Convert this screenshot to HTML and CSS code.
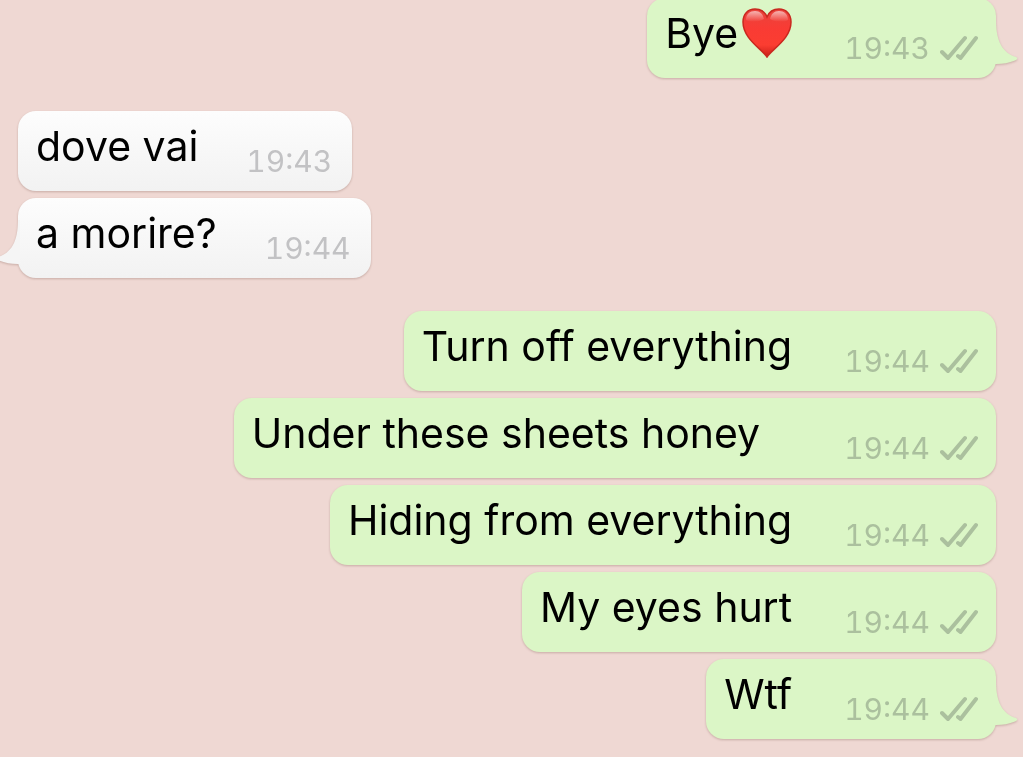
FILE: index.html
```html
<!DOCTYPE html>
<html lang="en">
<head>
<meta charset="utf-8">
<meta name="viewport" content="width=device-width, initial-scale=1">
<title>Chat</title>
<link rel="stylesheet" href="styles.css">
</head>
<body>
<svg class="defs" aria-hidden="true">
  <defs>
    <symbol id="ticks" viewBox="0 0 38 26">
      <path d="M2 17L8 23L25 3M18 21L20.500 23L36 3" fill="none" stroke="currentColor" stroke-width="4" stroke-linecap="round" stroke-linejoin="round"/>
    </symbol>
    <symbol id="tail" viewBox="0 0 24 46">
      <path d="M0 0H2C2 22 9 33 22 37Q25 39 21 40.500Q12 44 2 44H0Z" fill="currentColor"/>
    </symbol>
    <linearGradient id="heart-red" x1="0" y1="0" x2="0" y2="1">
      <stop offset="0" stop-color="#e8443d"/>
      <stop offset="0.400" stop-color="#f93b34"/>
      <stop offset="0.750" stop-color="#fb3d31"/>
      <stop offset="1" stop-color="#c91f17"/>
    </linearGradient>
    <linearGradient id="heart-shine" x1="0" y1="0" x2="0" y2="1">
      <stop offset="0" stop-color="#fff" stop-opacity="0.600"/>
      <stop offset="1" stop-color="#fff" stop-opacity="0"/>
    </linearGradient>
  </defs>
</svg>
<main class="chat">
  <section class="group sent">
    <article class="bubble">
      <p class="text">Bye<svg class="heart" viewBox="0 0 50 50" role="img" aria-label="Red heart">
        <path d="M25 49C20 41 1 31 1 14C1 6 6 1 13 1C19 1 23 4 25 9C27 4 31 1 37 1C44 1 49 6 49 14C49 31 30 41 25 49Z" fill="url(#heart-red)" stroke="#c9281f" stroke-width="1.500"/>
        <path d="M4 12C4 6 8 3 13 3C18 3 21 6 22 11C17 14 8 15 4 12ZM46 12C46 6 42 3 37 3C32 3 29 6 28 11C33 14 42 15 46 12Z" fill="url(#heart-shine)"/>
      </svg></p>
      <div class="meta"><time>19:43</time><svg class="ticks" role="img" aria-label="Delivered"><use href="#ticks"/></svg></div>
      <svg class="tail" aria-hidden="true"><use href="#tail"/></svg>
    </article>
  </section>
  <section class="group received">
    <article class="bubble">
      <p class="text">dove vai</p>
      <div class="meta"><time>19:43</time></div>
    </article>
    <article class="bubble">
      <p class="text">a morire?</p>
      <div class="meta"><time>19:44</time></div>
      <svg class="tail" aria-hidden="true"><use href="#tail"/></svg>
    </article>
  </section>
  <section class="group sent">
    <article class="bubble">
      <p class="text">Turn off everything</p>
      <div class="meta"><time>19:44</time><svg class="ticks" role="img" aria-label="Delivered"><use href="#ticks"/></svg></div>
    </article>
    <article class="bubble roomy">
      <p class="text">Under these sheets honey</p>
      <div class="meta"><time>19:44</time><svg class="ticks" role="img" aria-label="Delivered"><use href="#ticks"/></svg></div>
    </article>
    <article class="bubble">
      <p class="text">Hiding from everything</p>
      <div class="meta"><time>19:44</time><svg class="ticks" role="img" aria-label="Delivered"><use href="#ticks"/></svg></div>
    </article>
    <article class="bubble">
      <p class="text">My eyes hurt</p>
      <div class="meta"><time>19:44</time><svg class="ticks" role="img" aria-label="Delivered"><use href="#ticks"/></svg></div>
    </article>
    <article class="bubble">
      <p class="text">Wtf</p>
      <div class="meta"><time>19:44</time><svg class="ticks" role="img" aria-label="Delivered"><use href="#ticks"/></svg></div>
      <svg class="tail" aria-hidden="true"><use href="#tail"/></svg>
    </article>
  </section>
</main>
</body>
</html>
```
FILE: styles.css
```css
* {
  box-sizing: border-box;
}

body {
  margin: 0;
  background: #efd8d3;
  color: #000;
  font-family: Inter, "Liberation Sans", sans-serif;
  overflow: hidden;
}

.defs {
  position: absolute;
  width: 0;
  height: 0;
}

/* The first message is scrolled slightly past the top edge. */
.chat {
  display: flex;
  flex-direction: column;
  gap: 33px;
  margin-top: -2px;
  padding: 0 27px 18px 18px;
}

.group {
  display: flex;
  flex-direction: column;
  gap: 7px;
}

.sent {
  align-items: flex-end;
}

.received {
  align-items: flex-start;
}

.bubble {
  position: relative;
  display: flex;
  align-items: flex-end;
  gap: 52px;
  padding: 9px 18px 11px;
  border-radius: 18px;
  filter: drop-shadow(0 1px 1px rgba(110, 70, 60, 0.3));
}

.roomy {
  gap: 84px;
}

.sent .bubble {
  background: #dbf6c6;
}

.received .bubble {
  gap: 48px;
  padding-right: 20px;
  background: linear-gradient(#fdfdfd, #f2f2f2);
}

.text {
  display: flex;
  align-items: center;
  margin: 0;
  padding-bottom: 8px;
  font-size: 41px;
  line-height: 52px;
}

.heart {
  width: 50px;
  height: 50px;
  margin-left: 4px;
}

.meta {
  display: flex;
  align-items: center;
  gap: 10px;
  color: #c2c2c4;
  font-size: 30px;
  font-variant-numeric: tabular-nums;
  line-height: 38px;
}

.sent .meta {
  color: #abc09e;
}

.ticks {
  width: 38px;
  height: 26px;
}

.tail {
  position: absolute;
  bottom: 12px;
  left: calc(100% - 2px);
  width: 24px;
  height: 46px;
  color: #dbf6c6;
}

.received .tail {
  right: calc(100% - 2px);
  left: auto;
  color: #f5f5f5;
  transform: scaleX(-1);
}
```
